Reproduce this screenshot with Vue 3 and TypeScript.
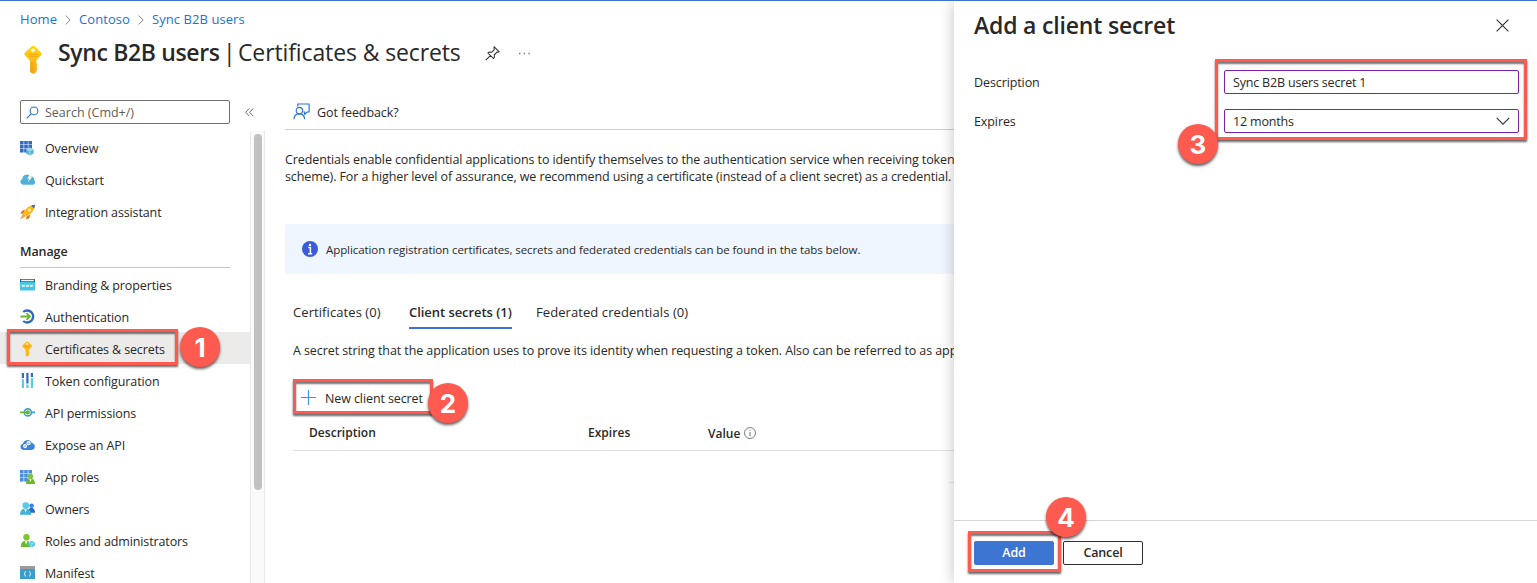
<script setup lang="ts">
interface NavItem {
  label: string
  icon: string
  active?: boolean
}

const crumbs: string[] = ['Home', 'Contoso', 'Sync B2B users']

const topItems: NavItem[] = [
  { label: 'Overview', icon: 'overview' },
  { label: 'Quickstart', icon: 'quickstart' },
  { label: 'Integration assistant', icon: 'rocket' },
]

const manageItems: NavItem[] = [
  { label: 'Branding & properties', icon: 'branding' },
  { label: 'Authentication', icon: 'auth' },
  { label: 'Certificates & secrets', icon: 'key', active: true },
  { label: 'Token configuration', icon: 'token' },
  { label: 'API permissions', icon: 'api' },
  { label: 'Expose an API', icon: 'expose' },
  { label: 'App roles', icon: 'approles' },
  { label: 'Owners', icon: 'owners' },
  { label: 'Roles and administrators', icon: 'roles' },
  { label: 'Manifest', icon: 'manifest' },
]

const groups = [
  { title: '', items: topItems },
  { title: 'Manage', items: manageItems },
]
</script>

<template>
  <div class="page">
    <header class="head">
      <nav class="crumbs">
        <template v-for="(c, i) in crumbs" :key="c">
          <svg v-if="i" class="crumb-sep" width="6" height="10" viewBox="0 0 6 10"><path d="M.6.5 5.2 5 .6 9.5" fill="none" stroke="#8a8886" /></svg>
          <a>{{ c }}</a>
        </template>
      </nav>
      <div class="title-row">
        <svg class="title-key" width="18" height="28" viewBox="0 0 18 28">
          <defs>
            <linearGradient id="gold" x1="0" y1="0" x2="0" y2="1"><stop offset="0" stop-color="#ffd70f" /><stop offset="1" stop-color="#f5a51d" /></linearGradient>
          </defs>
          <path d="M7.2.7a2.8 2.8 0 0 1 3.8 0L16.7 6.3a2.3 2.3 0 0 1 0 3.3L12.4 14.4V17l1 1.2-1 1.2 1 1.3-1 1.2 1 1.2-1 1.5V26L9.1 28 6 26V14.4L1.2 9.6a2.3 2.3 0 0 1 0-3.3z" fill="url(#gold)" />
          <circle cx="9.1" cy="4.2" r="1.8" fill="#fff" />
          <path d="M5 8.4h8.2M5 10.4h8.2" stroke="#e9a812" stroke-width=".9" />
          <path d="M8 14.5v10.8" stroke="#e99a14" stroke-width=".8" />
        </svg>
        <h1><b>Sync B2B users</b><span class="bar">|</span><span class="title-rest">Certificates &amp; secrets</span></h1>
        <svg class="pin" width="15" height="15" viewBox="0 0 15 15"><path d="M9.2.9 14 5.7l-1.1.5-.9-.1-2.7 2.7.1 2.5-.9 1.2L3 7l1.2-.9 2.5.1L9.3 3.5 9 2.1zM5.6 9.4.8 14.2" fill="none" stroke="#323130" stroke-width="1.05" /></svg>
        <svg class="dots" width="11" height="3" viewBox="0 0 11 3"><path d="M0 1.5h1.4M4.7 1.5h1.4M9.4 1.5h1.4" stroke="#7a7876" stroke-width="1.4" /></svg>
      </div>
    </header>

    <div class="body">
      <aside class="side">
        <div class="search-row">
          <div class="search">
            <svg width="13" height="13" viewBox="0 0 13 13"><circle cx="8" cy="4.9" r="3.9" fill="none" stroke="#2b72cf" stroke-width="1.1" /><path d="M5.2 7.8.7 12.3" stroke="#2b72cf" stroke-width="1.2" /></svg>
            <span>Search (Cmd+/)</span>
          </div>
          <svg class="collapse" width="9" height="9" viewBox="0 0 9 9"><path d="M4.2.5.7 4.3l3.5 3.8M8.1.5 4.6 4.3l3.5 3.8" fill="none" stroke="#605e5c" stroke-width=".9" /></svg>
        </div>
        <div class="nav-wrap">
          <div class="nav">
            <section v-for="g in groups" :key="g.title" class="group">
              <h2 v-if="g.title">{{ g.title }}</h2>
              <div v-for="it in g.items" :key="it.label" class="item" :class="{ active: it.active }">
                <svg class="ico" width="16" height="16" viewBox="0 0 16 16">
                  <g v-if="it.icon === 'overview'">
                    <path d="M0 1h3.6v3.4H0zM4.2 1h3.6v3.4H4.2zM8.4 1H12v3.4H8.4zM0 5h3.6v3.4H0zM4.2 5h3.6v3.4H4.2zM8.4 5H12v3.4H8.4zM0 9h3.6v3.4H0zM4.2 9h3.6v3.4H4.2z" fill="#2f6ac5" />
                    <path d="m9.8 7.6 3.8 1.9v4l-3.8 2-3.7-2v-4z" fill="#59b4d9" />
                    <path d="m9.8 7.6 3.8 1.9-3.8 2-3.7-2z" fill="#9fd9ee" /><path d="M9.8 11.5v4" stroke="#d8f2fb" stroke-width=".6" />
                  </g>
                  <g v-else-if="it.icon === 'quickstart'">
                    <path d="M3 12.7a3 3 0 0 1-.7-5.8A4.6 4.6 0 0 1 10.6 4.5a3.7 3.7 0 0 1 3.6 3.8 2.5 2.5 0 0 1-1.9 4.4z" fill="#4fb0d8" />
                    <path d="m9.8 2.2-2.6 4.5h2l-1.5 3.6 4.5-5h-2.1l2-3.1z" fill="#fff" />
                  </g>
                  <g v-else-if="it.icon === 'rocket'">
                    <path d="M5 5.5 1.8 7 .5 10l3-.6zM10.5 10.8 9 14.2l-3 1.2.8-3.2z" fill="#ef6c13" />
                    <path d="M3.2 9.5 0 15.6l6-3.5z" fill="#ff9b2f" />
                    <path d="M14.8.7c.2 4.8-2.7 8.8-8.2 11.8L3.2 9.2C6 3.8 10 1 14.8.7z" fill="#fdb913" />
                    <path d="M14.8.7c.1 1.5-.2 2.6-.8 3.7L11.2 1.4c1.1-.4 2.3-.7 3.6-.7z" fill="#2f6ac5" />
                    <circle cx="9.5" cy="6" r="1.5" fill="#fff1bd" />
                  </g>
                  <g v-else-if="it.icon === 'branding'">
                    <rect y="2" width="15" height="11.6" rx=".7" fill="#45c4e8" /><path d="M0 2h15v3H0z" fill="#2267ab" /><path d="M1.2 2.8h12.6v1.4H1.2z" fill="#e8f7fc" />
                    <path d="m2 7.7.6 2.2.7-2 .7 2 .7-2.2M6 7.7l.6 2.2.7-2 .7 2 .7-2.2M10 7.7l.6 2.2.7-2 .7 2 .7-2.2" fill="none" stroke="#fff" stroke-width=".75" />
                  </g>
                  <g v-else-if="it.icon === 'auth'">
                    <path d="M3.2 3a6 6 0 1 1 0 9" fill="none" stroke="#2f6ac5" stroke-width="2.3" />
                    <path d="M.5 7.5h9M6.5 4.2l3.4 3.3-3.4 3.3" fill="none" stroke="#6cb52d" stroke-width="1.8" />
                  </g>
                  <g v-else-if="it.icon === 'key'">
                    <path d="M6.2.9a1.5 1.5 0 0 1 1.9 0l3.4 3.2a1.3 1.3 0 0 1 0 1.9L8.8 8.7v1.6l.7.8-.7.8.7.8-.7.9v.9l-1.6 1.3-1.6-1.4V8.7L2.8 6a1.3 1.3 0 0 1 0-1.9z" fill="#fbb917" />
                    <circle cx="7.1" cy="2.9" r="1" fill="#fff3c8" /><path d="M4.8 5.5h4.8" stroke="#df9207" stroke-width=".7" />
                  </g>
                  <g v-else-if="it.icon === 'token'">
                    <path d="M2.9 0v5M7.4 0v10.4M11.9 0v4" stroke="#2f6ac5" stroke-width="2.2" />
                    <path d="M2.9 6.3V15M7.4 11.4V15M11.9 5.3V15" stroke="#55cced" stroke-width="2.2" />
                  </g>
                  <g v-else-if="it.icon === 'api'">
                    <circle cx="7.8" cy="7.4" r="3.5" fill="none" stroke="#3c9fd2" stroke-width="1.6" />
                    <path d="M11.2 7.4H15" stroke="#3c9fd2" stroke-width="1.8" /><path d="M0 7.4h7.2" stroke="#6cb52d" stroke-width="1.7" /><circle cx="7.8" cy="7.4" r="2.1" fill="#6cb52d" />
                  </g>
                  <g v-else-if="it.icon === 'expose'">
                    <path d="M3.3 13a3.2 3.2 0 0 1-.4-6.3 4.8 4.8 0 0 1 9-.8A3.6 3.6 0 0 1 11.7 13z" fill="#3d83dc" />
                    <circle cx="5.1" cy="9.1" r="1.5" fill="#83b7ef" stroke="#fff" stroke-width="1.1" /><circle cx="8.6" cy="6.2" r="1.6" fill="#83b7ef" stroke="#fff" stroke-width="1.1" />
                  </g>
                  <g v-else-if="it.icon === 'approles'">
                    <path d="M0 1h3.6v3.4H0zM4.2 1h3.6v3.4H4.2zM8.4 1H12v3.4H8.4zM0 5h3.6v3.4H0zM4.2 5h3.6v3.4H4.2zM8.4 5H12v3.4H8.4zM0 9h3.6v3.4H0zM4.2 9h3.6v3.4H4.2z" fill="#4b8be0" />
                    <path d="M6 15c.1-3 .9-5.5 4.5-5.5S14.9 12 15 15z" fill="#6bb92b" /><path d="m9.3 9.6 1.2 3.6 1.2-3.6z" fill="#f3ffe8" /><circle cx="10.5" cy="7.4" r="2.6" fill="#7cc53a" />
                  </g>
                  <g v-else-if="it.icon === 'owners'">
                    <path d="M8 11.7c.1-3 1-4.6 3.4-4.6s3.5 1.6 3.6 4.6z" fill="#2b66cc" /><circle cx="11.6" cy="4.8" r="2.3" fill="#3b7fdf" />
                    <path d="M0 13.8c.2-4 1.7-6.3 5.6-6.3s5.4 2.3 5.6 6.3z" fill="#3db2dd" /><path d="m4.2 7.6 1.4 4.2L7 7.6z" fill="#e6f9ff" /><circle cx="5.8" cy="4.6" r="3.3" fill="#55c8ec" />
                  </g>
                  <g v-else-if="it.icon === 'roles'">
                    <path d="M.8 13.9c.2-4 1.5-6.2 5.3-6.2s5.2 2.2 5.4 6.2z" fill="#6bb92b" /><path d="m4.8 7.8 1.3 4 1.4-4z" fill="#f3ffe8" /><circle cx="6.5" cy="4.2" r="3.2" fill="#7fc52f" />
                    <path d="m11.7 7.7 3.3 1.5v3.5l-3.3 1.8-3.2-1.8V9.2z" fill="#59c8ec" /><path d="m8.5 9.2 3.2 1.6L15 9.2M11.7 10.8v3.7" stroke="#b7effc" stroke-width=".6" fill="none" />
                  </g>
                  <g v-else>
                    <rect y="1" width="15" height="13" fill="#3b9dcb" /><path d="M0 1h15v3H0z" fill="#9b9b9b" />
                    <path d="M5.8 6.3c-1.3 0-.3 2.2-1.6 2.5 1.3.3.3 2.6 1.6 2.6M9.2 6.3c1.3 0 .3 2.2 1.6 2.5-1.3.3-.3 2.6-1.6 2.6" fill="none" stroke="#fff" stroke-width=".9" />
                  </g>
                </svg>
                <span>{{ it.label }}</span>
                <div v-if="it.active" class="mark mark-nav"><i class="badge">1</i></div>
              </div>
            </section>
          </div>
          <div class="track"><div class="thumb"></div></div>
        </div>
      </aside>

      <main class="main">
        <div class="toolbar">
          <svg width="17" height="17" viewBox="0 0 17 17"><g fill="none" stroke="#2b72cf" stroke-width="1.15"><path d="M4.7 3.6V1h11.4v8H14l-2.3 2.3V9h-1.3" /><circle cx="6.4" cy="7.6" r="3.2" /><path d="M.9 16.3c.2-3.5 2.3-5.4 5.4-5.4s5.1 1.9 5.3 5.4" /></g></svg>
          <span>Got feedback?</span>
        </div>
        <p class="intro">Credentials enable confidential applications to identify themselves to the authentication service when receiving tokens<br />scheme). For a higher level of assurance, we recommend using a certificate (instead of a client secret) as a credential.</p>
        <div class="info">
          <svg width="16" height="16" viewBox="0 0 16 16"><circle cx="8" cy="8" r="8" fill="#3b5bdb" /><circle cx="8" cy="3.9" r="1.2" fill="#fff" /><path d="M6.2 6.5h2.2v6M6 12.8h4.2" fill="none" stroke="#fff" stroke-width="1.5" /></svg>
          <span>Application registration certificates, secrets and federated credentials can be found in the tabs below.</span>
        </div>
        <div class="tabs">
          <span class="t0">Certificates (0)</span>
          <span class="t1">Client secrets (1)</span>
          <span class="t2">Federated credentials (0)</span>
        </div>
        <p class="desc">A secret string that the application uses to prove its identity when requesting a token. Also can be referred to as application</p>
        <div class="new-secret">
          <svg width="15" height="15" viewBox="0 0 15 15"><path d="M7.5 0v15M0 7.5h15" stroke="#3a96dd" stroke-width="1.2" /></svg>
          <span>New client secret</span>
          <div class="mark mark-new"><i class="badge">2</i></div>
        </div>
        <div class="thead">
          <span>Description</span><span>Expires</span>
          <span class="value"><span>Value</span>
            <svg width="12" height="12" viewBox="0 0 12 12"><circle cx="6" cy="6" r="5.5" fill="none" stroke="#605e5c" stroke-width=".8" /><path d="M6 5v4M6 2.8v1.1" stroke="#605e5c" stroke-width=".9" /></svg>
          </span>
        </div>
        <div class="row-end"></div>
      </main>
    </div>

    <section class="drawer">
      <div class="drawer-head">
        <h2>Add a client secret</h2>
        <svg width="13" height="13" viewBox="0 0 13 13"><path d="m.6.6 11.8 11.8M12.4.6.6 12.4" stroke="#323130" stroke-width="1.1" /></svg>
      </div>
      <div class="form">
        <div class="field"><label>Description</label><div class="input"><span>Sync B2B users secret 1</span></div></div>
        <div class="field"><label>Expires</label><div class="input"><span>12 months</span>
          <svg width="14" height="8" viewBox="0 0 14 8"><path d="m.7.8 6.3 6.3L13.3.8" fill="none" stroke="#323130" stroke-width="1.1" /></svg></div></div>
        <div class="mark mark-form"><i class="badge">3</i></div>
      </div>
      <footer class="foot">
        <button class="add">Add</button><button class="cancel">Cancel</button>
        <div class="mark mark-add"><i class="badge">4</i></div>
      </footer>
    </section>
  </div>
</template>

<style>
body { margin: 0; background: #fff; }
</style>

<style scoped>
* { box-sizing: border-box; }
.page {
  position: relative; width: 1537px; height: 583px; overflow: hidden;
  border-top: 1px solid #3b73cf; background: #fff; color: #292827;
  font: 12.5px/16px "Open Sans", "Noto Sans", sans-serif; letter-spacing: -.1px;
  display: flex; flex-direction: column; white-space: nowrap;
}
h1, h2, p { margin: 0; }
svg { display: block; flex: none; }
.head { height: 99px; flex: none; padding-left: 20px; }
.crumbs { display: flex; align-items: center; height: 36px; color: #2272ce; font-size: 13px; letter-spacing: .07px; }
.crumb-sep { margin: 2px 8px 0; }
.title-row { display: flex; align-items: center; height: 30px; }
.title-key { margin: 15px 0 0 4px; }
h1 { display: flex; font-size: 23px; line-height: 30px; font-weight: 400; margin-left: 16px; letter-spacing: -.12px; }
h1 b { font-weight: 600; width: 165px; letter-spacing: -.35px; }
.bar { width: 15px; }
.title-rest { width: 225px; }
.pin { margin: 2px 0 0 22px; }
.dots { margin: 2px 0 0 19px; }
.body { display: flex; flex: 1; min-height: 0; }
.side { width: 265px; flex: none; display: flex; flex-direction: column; }
.search-row { display: flex; align-items: center; height: 24px; padding-left: 20px; flex: none; }
.search { width: 210px; height: 24px; border: 1px solid #72706e; border-radius: 2px; display: flex; align-items: center; gap: 6px; padding-left: 5px; color: #605e5c; }
.search span { padding-top: 2px; letter-spacing: 0; }
.collapse { margin-left: 15px; }
.nav-wrap { display: flex; flex: 1; min-height: 0; padding-top: 7px; }
.nav { width: 250px; }
.item { position: relative; height: 32px; display: flex; align-items: center; padding-left: 20px; gap: 9px; }
.item.active { background: #edebe9; }
.item span { padding-top: 3px; letter-spacing: -.12px; }
.ico { margin-top: 1px; }
.group h2 { font-size: 12.5px; font-weight: 600; line-height: 40px; height: 36px; margin: 5px 20px 0; border-bottom: 1px solid #c8c6c4; }
.track { width: 15px; border: solid #e8e8e8; border-width: 0 1px; background: #fafafa; padding: 3px 0 0 3px; }
.thumb { width: 8px; height: 356px; border-radius: 4px; background: #c1c1c1; }
.main { flex: 1; padding-left: 20px; min-width: 0; }
.toolbar { display: flex; align-items: center; height: 30px; border-bottom: 1px solid #d2d0ce; padding: 0 0 5px 8px; gap: 7px; }
.toolbar svg { margin-top: -2px; }
.toolbar span { padding-top: 2px; }
.intro { margin-top: 21px; font-size: 12.5px; line-height: 17px; letter-spacing: -.105px; }
.info { height: 50px; background: #f0f6ff; margin-top: 39px; display: flex; align-items: center; padding-left: 17px; gap: 8px; font-size: 11.5px; letter-spacing: -.078px; border-radius: 2px; }
.info span { padding-top: 2px; }
.tabs { display: flex; height: 30px; margin: 25px 0 0 8px; gap: 24px; font-size: 13px; line-height: 26px; letter-spacing: .08px; }
.tabs .t1 { font-weight: 600; border-bottom: 2px solid #3b73cf; width: 103px; letter-spacing: -.05px; }
.tabs .t0 { width: 92px; }
.desc { margin: 14px 0 0 8px; font-size: 12.5px; letter-spacing: -.085px; }
.new-secret { position: relative; display: flex; align-items: center; height: 36px; width: 140px; margin: 21px 0 0 8px; padding-left: 8px; gap: 9px; }
.new-secret svg { margin-top: -2px; }
.new-secret span { padding-top: 2px; }
.thead { margin-left: 8px; height: 35px; border-bottom: 1px solid #e1dfdd; display: grid; grid-template-columns: 279px 120px 1fr; align-items: center; padding-left: 16px; font-weight: 600; font-size: 12px; letter-spacing: .03px; }
.value { display: flex; align-items: center; gap: 4px; }
.value span { padding-top: 2px; }
.row-end { height: 32px; width: 6px; border-bottom: 1px solid #e4e3e2; margin-left: 664px; }
.drawer {
  position: absolute; left: 954px; top: 0; right: 0; bottom: 0; background: #fff;
  box-shadow: 0 0 14px rgba(0, 0, 0, .24); display: flex; flex-direction: column;
}
.drawer-head { display: flex; justify-content: space-between; align-items: center; height: 49px; padding: 0 28px 2px 20px; flex: none; }
.drawer-head svg { margin-top: 2px; }
.drawer-head h2 { font-size: 23px; font-weight: 600; line-height: 30px; letter-spacing: -.18px; }
.form { position: relative; padding: 20px 18px 0 20px; display: flex; flex-direction: column; gap: 15px; height: 90px; }
.field { display: flex; align-items: center; height: 24px; }
.field label { width: 250px; flex: none; padding-top: 2px; }
.input { flex: 1; height: 24px; border: 1px solid #8121a6; border-radius: 2px; display: flex; align-items: center; justify-content: space-between; padding: 0 8px; }
.input span { padding-top: 2px; letter-spacing: -.18px; }
.foot { position: relative; margin-top: auto; height: 63px; border-top: 1px solid #d6d4d2; padding: 20px; display: flex; gap: 9px; flex: none; }
button { font: 600 12.5px/16px "Open Sans", sans-serif; letter-spacing: -.15px; width: 80px; height: 24px; border-radius: 2px; padding: 0; border: 1px solid #323130; background: #fff; color: #292827; }
button.add { background: #3c76d2; border-color: #3c76d2; color: #fff; }
.mark { position: absolute; border: 3px solid #ff5a4f; box-shadow: 0 2px 2px rgba(0, 0, 0, .6), inset 0 2px 2px rgba(0, 0, 0, .55); z-index: 2; }
.badge {
  position: absolute; width: 40px; height: 40px; border-radius: 50%; background: #ff5a4f; color: #fff;
  font: 700 26px/42px Inter, "Liberation Sans", sans-serif; text-align: center; letter-spacing: 0;
  box-shadow: 0 2px 3px rgba(0, 0, 0, .65);
}
.mark-nav { left: 7px; top: -3px; width: 171px; height: 36px; }
.mark-nav .badge { left: 170px; top: -5px; }
.mark-new { left: 0; top: -1px; width: 140px; height: 35px; }
.mark-new .badge { left: 132px; top: 1px; }
.mark-form { left: 261px; top: 9px; width: 312px; height: 81px; }
.mark-form .badge { left: -40px; top: 62px; }
.mark-add { left: 14px; top: 10px; width: 93px; height: 41px; }
.mark-add .badge { left: 75px; top: -37px; }
</style>
